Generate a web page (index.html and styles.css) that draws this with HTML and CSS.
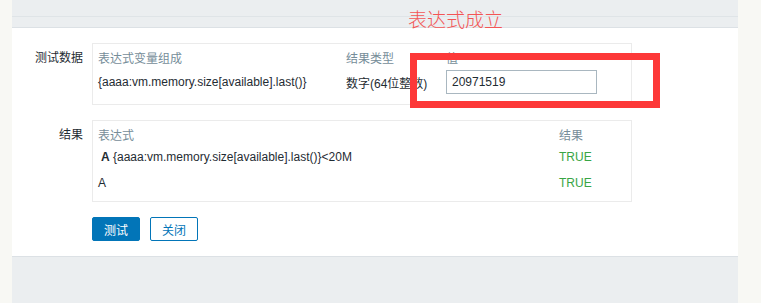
FILE: index.html
```html
<!DOCTYPE html>
<html lang="zh">
<head>
    <meta charset="UTF-8">
    <title>测试表达式</title>
    <link rel="stylesheet" href="styles.css">
</head>
<body>
    <div class="side"></div>

    <div class="page">
        <div class="top-bar">
            <div class="top-line"></div>
        </div>

        <div class="content">
            <div class="form-row">
                <div class="form-label">测试数据</div>
                <div class="form-box">
                    <div class="grid test-data">
                        <div class="head">表达式变量组成</div>
                        <div class="head">结果类型</div>
                        <div class="head">值</div>
                        <div>{aaaa:vm.memory.size[available].last()}</div>
                        <div>数字(64位整数)</div>
                        <div><input class="value-input" type="text" value="20971519"></div>
                    </div>
                </div>
            </div>

            <div class="form-row">
                <div class="form-label">结果</div>
                <div class="form-box">
                    <div class="grid result">
                        <div class="head">表达式</div>
                        <div class="head">结果</div>
                        <div><b>A</b> {aaaa:vm.memory.size[available].last()}&lt;20M</div>
                        <div class="ok">TRUE</div>
                        <div>A</div>
                        <div class="ok">TRUE</div>
                    </div>
                </div>
            </div>

            <div class="buttons">
                <button class="btn primary">测试</button>
                <button class="btn">关闭</button>
            </div>

            <!-- 截图上的标注 -->
            <div class="note-text">表达式成立</div>
            <div class="note-box"></div>
        </div>

        <div class="bottom-bar"></div>
    </div>

    <div class="side"></div>
</body>
</html>
```

FILE: styles.css
```css
body {
    margin: 0;
    height: 303px;
    display: flex;
    background: #f8f8f4;
    font-family: "Liberation Sans", Arial, "Noto Sans CJK SC", sans-serif;
    font-size: 12px;
    color: #1f2c33;
    overflow: hidden;
}

.side {
    width: 12px;
    flex: none;
}

.side:last-child {
    width: 23px;
}

.page {
    width: 726px;
    flex: none;
    display: flex;
    flex-direction: column;
}

.top-bar {
    height: 27px;
    background: #ebeef0;
    border-bottom: 1px solid #dce1e5;
}

.top-line {
    height: 16px;
    border-bottom: 1px solid #dfe4e7;
}

.content {
    position: relative;
    background: #fff;
    padding: 15px 0;
    height: 198px;
}

.form-row {
    display: flex;
    margin-bottom: 15px;
}

.form-label {
    width: 71px;
    padding-top: 5px;
    padding-right: 9px;
    text-align: right;
    font-family: "Noto Sans CJK SC", sans-serif;
}

.form-box {
    width: 538px;
    border: 1px solid #ebebeb;
}

.grid {
    display: grid;
    align-items: center;
    padding-left: 5px;
}

.head {
    color: #768d99;
    font-family: "Noto Sans CJK SC", sans-serif;
}

.test-data {
    grid-template-columns: 248px 100px 1fr;
    grid-template-rows: 26px 24px;
    padding-bottom: 10px;
}

.value-input {
    width: 151px;
    height: 24px;
    padding: 0 5px;
    border: 1px solid #a9b7c0;
    box-sizing: border-box;
    font-family: inherit;
    font-size: 12px;
    color: #1f2c33;
    display: block;
}

.result {
    grid-template-columns: 461px 1fr;
    grid-template-rows: 22px 26px 25px;
    align-items: start;
    line-height: 14px;
    padding-top: 7px;
}

.result b {
    margin-left: 3px;
}

.ok {
    color: #38a545;
}

.buttons {
    display: flex;
    gap: 10px;
    padding-left: 80px;
}

.btn {
    width: 48px;
    height: 24px;
    padding: 0;
    border: 1px solid #0275b8;
    border-radius: 2px;
    background: #fff;
    color: #0275b8;
    font-family: "Noto Sans CJK SC", sans-serif;
    font-size: 12px;
}

.btn.primary {
    background: #0275b8;
    color: #fff;
}

.note-text {
    position: absolute;
    left: 396px;
    top: -23px;
    font-family: "Noto Sans CJK SC", sans-serif;
    font-weight: 300;
    font-size: 19px;
    color: #f35555;
}

.note-box {
    position: absolute;
    left: 398px;
    top: 25px;
    width: 236px;
    height: 41px;
    border: 7px solid #fd3838;
}

.bottom-bar {
    flex: 1;
    background: #ebeef0;
    border-top: 1px solid #dce1e5;
}
```
